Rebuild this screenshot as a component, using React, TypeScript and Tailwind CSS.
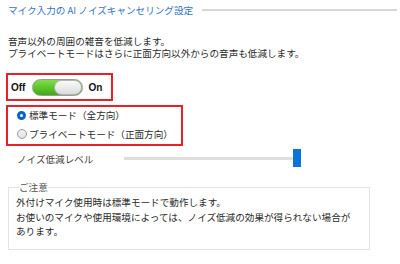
export default function App() {
  return (
    <div className="w-[400px] h-[264px] bg-white overflow-hidden font-['Noto_Sans_CJK_JP','Noto_Sans',sans-serif] text-[9.6px] text-[#2b2b2b]">
      <div className="flex items-center h-[20px] pl-[8px] pr-[3px]">
        <span className="text-[#3474c4] whitespace-nowrap">マイク入力の AI ノイズキャンセリング設定</span>
        <div className="flex-1 ml-[9px] h-[2px] bg-[#d8d8d8]" />
      </div>
      <div className="mt-[15px] pl-[8px] leading-[12px] whitespace-pre-line">
        {"音声以外の周囲の雑音を低減します。\nプライベートモードはさらに正面方向以外からの音声も低減します。"}
      </div>
      <div className="ml-[6px] mt-[14px] w-[107px] h-[28px] border-2 border-[#e8202a] flex items-center pl-[3px]">
        <span className="font-['Liberation_Sans',sans-serif] font-bold text-[10px] text-[#111]">Off</span>
        <div className="ml-[7px] w-[51px] h-[17px] rounded-full border border-[#9a9a9a] bg-[linear-gradient(to_bottom,#7fe045,#3faa14)] flex justify-end">
          <div className="w-[28px] h-full rounded-full border border-[#b5b5b5] bg-[linear-gradient(to_bottom,#fafafa,#dcdcdc)]" />
        </div>
        <span className="ml-[5px] font-['Liberation_Sans',sans-serif] font-bold text-[10px] text-[#111]">On</span>
      </div>
      <div className="ml-[6px] mt-[4px] w-[177px] h-[41px] border-2 border-[#e8202a] flex flex-col gap-[3px] pl-[9px]">
        <div className="h-[16px] flex items-center">
          <div className="w-[9px] h-[9px] rounded-full border-[3px] border-[#0b63c5] bg-white" />
          <span className="ml-[3px]">標準モード（全方向）</span>
        </div>
        <div className="h-[16px] flex items-center">
          <div className="w-[10px] h-[10px] rounded-full border border-[#9a9a9a] bg-[linear-gradient(to_bottom,#f4f4f4,#e0e0e0)]" />
          <span className="ml-[2px]">プライベートモード（正面方向）</span>
        </div>
      </div>
      <div className="mt-[3px] h-[18px] flex items-center pl-[17px]">
        <span className="w-[107px] pt-[3px] text-[#444]">ノイズ低減レベル</span>
        <div className="relative w-[177px] h-[18px] flex items-center">
          <div className="w-[174px] h-[3px] bg-[#dedede]" />
          <div className="absolute right-0 top-0 w-[8px] h-[18px] bg-[#0a74da]" />
        </div>
      </div>
      <fieldset className="ml-[8px] mt-[15px] w-[362px] border border-[#e4e4e4] pl-[7px] pt-[2px] pb-[10px]">
        <legend className="ml-[3px] leading-[11px] text-[#555]">ご注意</legend>
        <div className="leading-[14.5px] whitespace-nowrap">
          <div>外付けマイク使用時は標準モードで動作します。</div>
          <div>お使いのマイクや使用環境によっては、ノイズ低減の効果が得られない場合が</div>
          <div>あります。</div>
        </div>
      </fieldset>
    </div>
  );
}
